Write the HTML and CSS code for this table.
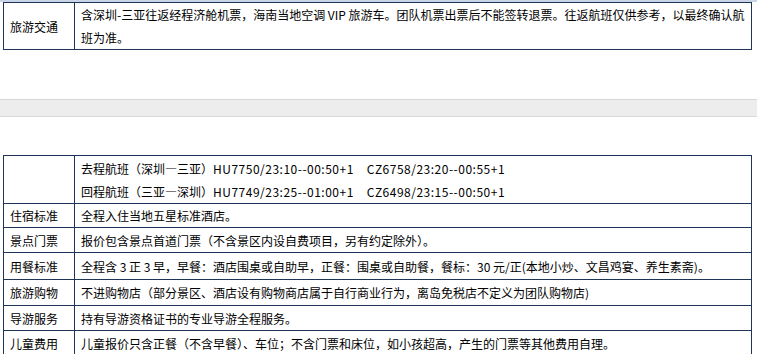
FILE: index.html
```html
<!DOCTYPE html>
<html lang="zh-CN">
<head>
<meta charset="utf-8">
<title>行程说明</title>
<link rel="stylesheet" href="styles.css">
</head>
<body>
<div class="top-strip"></div>
<table class="info first">
  <colgroup><col class="c-label"><col></colgroup>
  <tr class="r45">
    <td class="label">旅游交通</td>
    <td class="content">含深圳-三亚往返经程济舱机票，海南当地空调 VIP 旅游车。团队机票出票后不能签转退票。往返航班仅供参考，以最终确认航<br>班为准。</td>
  </tr>
</table>
<div class="band"></div>
<table class="info second">
  <colgroup><col class="c-label"><col></colgroup>
  <tr class="r48">
    <td class="label"></td>
    <td class="content">去程航班（深圳—三亚）<span class="code">HU7750/23:10--00:50+1</span><span class="gap"></span><span class="code">CZ6758/23:20--00:55+1</span><br>回程航班（三亚—深圳）<span class="code">HU7749/23:25--01:00+1</span><span class="gap"></span><span class="code">CZ6498/23:15--00:50+1</span></td>
  </tr>
  <tr class="r24">
    <td class="label">住宿标准</td>
    <td class="content">全程入住当地五星标准酒店。</td>
  </tr>
  <tr class="r25">
    <td class="label">景点门票</td>
    <td class="content">报价包含景点首道门票（不含景区内设自费项目，另有约定除外）。</td>
  </tr>
  <tr class="r27">
    <td class="label">用餐标准</td>
    <td class="content">全程含 3 正 3 早，早餐：酒店围桌或自助早，正餐：围桌或自助餐，餐标：30 元/正(本地小炒、文昌鸡宴、养生素斋)。</td>
  </tr>
  <tr class="r26">
    <td class="label">旅游购物</td>
    <td class="content">不进购物店（部分景区、酒店设有购物商店属于自行商业行为，离岛免税店不定义为团队购物店)</td>
  </tr>
  <tr class="r25">
    <td class="label">导游服务</td>
    <td class="content">持有导游资格证书的专业导游全程服务。</td>
  </tr>
  <tr class="r25">
    <td class="label">儿童费用</td>
    <td class="content">儿童报价只含正餐（不含早餐）、车位；不含门票和床位，如小孩超高，产生的门票等其他费用自理。</td>
  </tr>
</table>
<div class="bottom-line"></div>
</body>
</html>
```

FILE: styles.css
```css
html, body {
  margin: 0;
  padding: 0;
  background: #ffffff;
}
body {
  font-family: "Noto Sans CJK SC", "Noto Sans", sans-serif;
  font-size: 12px;
  color: #000000;
  width: 757px;
  height: 354px;
  overflow: hidden;
}
.top-strip {
  height: 2px;
  background: #c9d5e6;
}
.info {
  border-collapse: collapse;
  table-layout: fixed;
  width: 749px;
  margin-left: 3px;
}
.c-label { width: 71px; }
.info td {
  border: 1px solid #1f3558;
  padding: 0 6px;
  line-height: 23px;
  vertical-align: middle;
  white-space: nowrap;
  overflow: hidden;
}
.code {
  letter-spacing: 0.5px;
}
.gap {
  display: inline-block;
  width: 13px;
}
.r45 { height: 45px; }
.r48 { height: 48px; }
.r24 { height: 24px; }
.r25 { height: 25px; }
.r26 { height: 26px; }
.r27 { height: 27px; }
.band {
  margin-top: 49px;
  height: 16px;
  background: #ededed;
  border-top: 1px solid #d6d6d6;
  border-bottom: 1px solid #d9d9d9;
}
.second { margin-top: 38px; }
.bottom-line {
  height: 1px;
  background: #a9c0e0;
}
```
